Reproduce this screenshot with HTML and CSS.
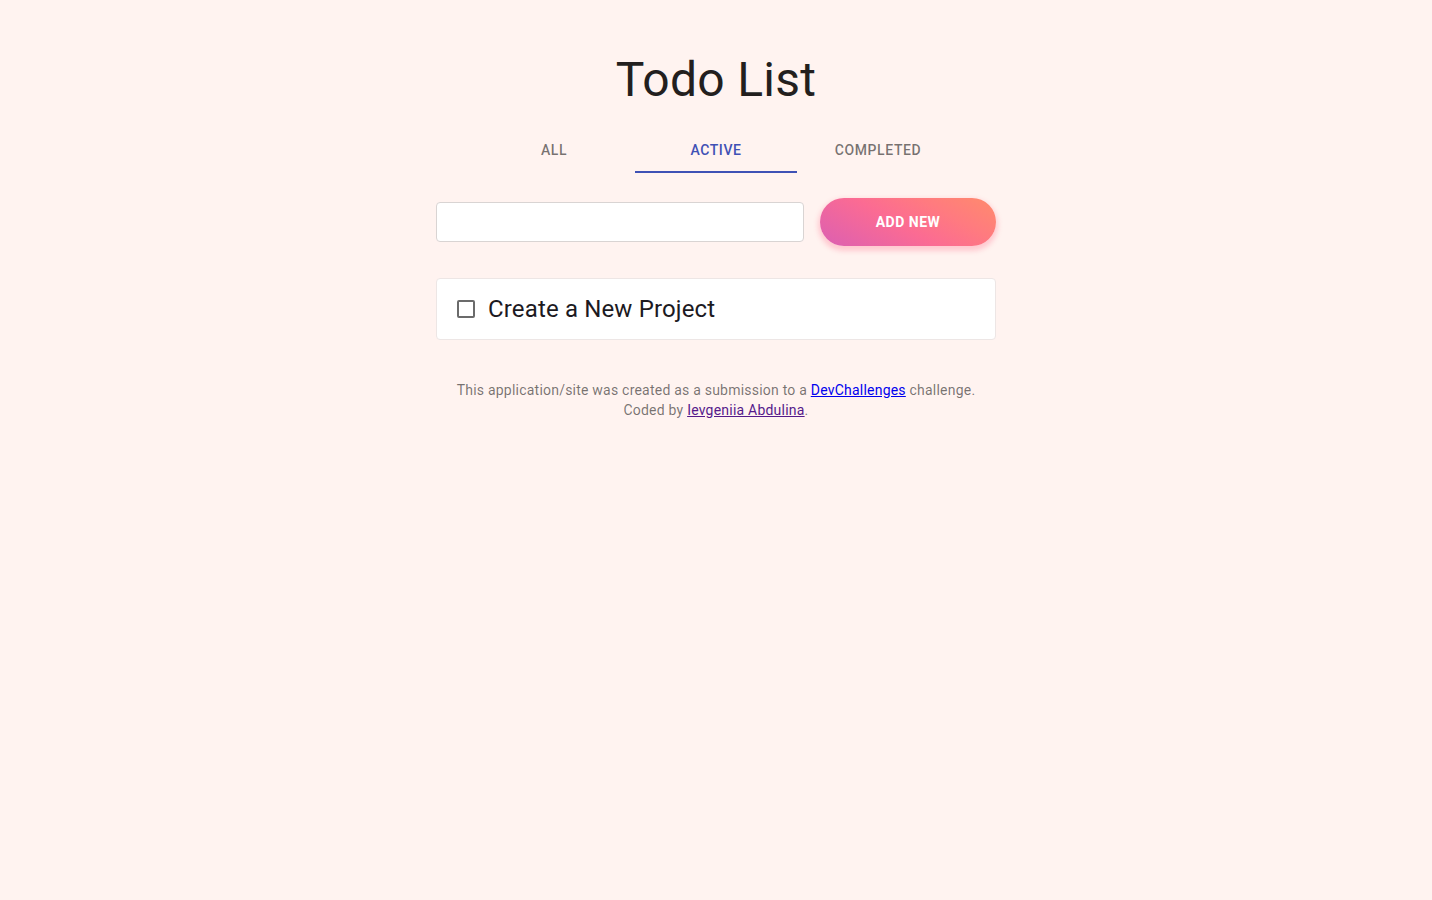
FILE: index.html
```html
<!DOCTYPE html>
<html lang="en">
<head>
<meta charset="utf-8">
<title>Todo List</title>
<link rel="stylesheet" href="styles.css">
</head>
<body>
<main class="app">
  <h1 class="title">Todo List</h1>
  <nav class="tabs">
    <button class="tab">All</button>
    <button class="tab tab-active">Active</button>
    <button class="tab">Completed</button>
  </nav>
  <form class="add-row">
    <input class="add-input" type="text" aria-label="New todo">
    <button class="add-btn" type="button">Add new</button>
  </form>
  <ul class="todo-list">
    <li class="todo-card">
      <span class="checkbox"></span>
      <span class="todo-text">Create a New Project</span>
    </li>
  </ul>
  <footer class="footer">
    <p>This application/site was created as a submission to a <a class="link-blue" href="#">DevChallenges</a> challenge.</p>
    <p>Coded by <a class="link-visited" href="#">Ievgeniia Abdulina</a>.</p>
  </footer>
</main>
</body>
</html>
```

FILE: styles.css
```css
* { box-sizing: border-box; }
html, body {
  margin: 0;
  padding: 0;
  background: #fff3f0;
  font-family: Roboto, "Liberation Sans", sans-serif;
}
.app {
  width: 560px;
  margin: 0 auto;
  padding-top: 52px;
  display: flex;
  flex-direction: column;
  align-items: stretch;
}
.title {
  margin: 0;
  font-size: 48px;
  font-weight: 400;
  line-height: 56px;
  letter-spacing: 0.3px;
  color: #231f1e;
  text-align: center;
}
.tabs {
  margin-top: 17px;
  display: flex;
  justify-content: center;
  height: 48px;
}
.tab {
  width: 162px;
  height: 48px;
  border: 0;
  background: transparent;
  font-family: Roboto, "Liberation Sans", sans-serif;
  font-size: 14px;
  font-weight: 500;
  letter-spacing: 0.6px;
  text-transform: uppercase;
  color: rgba(0, 0, 0, 0.54);
  padding: 4px 0 0;
  border-bottom: 2px solid transparent;
}
.tab-active {
  color: #3f51b5;
  border-bottom-color: #3f51b5;
}
.add-row {
  margin: 25px 0 0;
  display: flex;
  align-items: center;
  gap: 16px;
}
.add-input {
  width: 368px;
  height: 40px;
  border: 1px solid #d9d4d3;
  border-radius: 4px;
  background: #fff;
  outline: none;
}
.add-btn {
  flex: 1;
  height: 48px;
  border: 0;
  border-radius: 24px;
  background: linear-gradient(30deg, #db5fb2 0%, #fb6b93 45%, #ff7a80 70%, #ff8b6c 100%);
  box-shadow: 0 3px 5px 2px rgba(255, 105, 135, 0.3);
  color: #fff;
  font-family: Roboto, "Liberation Sans", sans-serif;
  font-size: 14px;
  font-weight: 700;
  letter-spacing: 0.5px;
  text-transform: uppercase;
}
.todo-list {
  list-style: none;
  margin: 32px 0 0;
  padding: 0;
}
.todo-card {
  height: 62px;
  background: #fff;
  border: 1px solid #ede6e5;
  border-radius: 4px;
  display: flex;
  align-items: center;
  padding-left: 20px;
  gap: 13px;
}
.checkbox {
  width: 18px;
  height: 18px;
  border: 2px solid #6b6b6b;
  border-radius: 2px;
  flex: none;
}
.todo-text {
  font-size: 24px;
  color: #1c1a1f;
  line-height: 28px;
  letter-spacing: 0.15px;
}
.footer {
  margin-top: 40px;
  text-align: center;
  font-size: 14px;
  line-height: 20px;
  color: rgba(0, 0, 0, 0.54);
  letter-spacing: 0.22px;
}
.footer p { margin: 0; }
.link-blue { color: #0000ee; }
.link-visited { color: #551a8b; }
```
